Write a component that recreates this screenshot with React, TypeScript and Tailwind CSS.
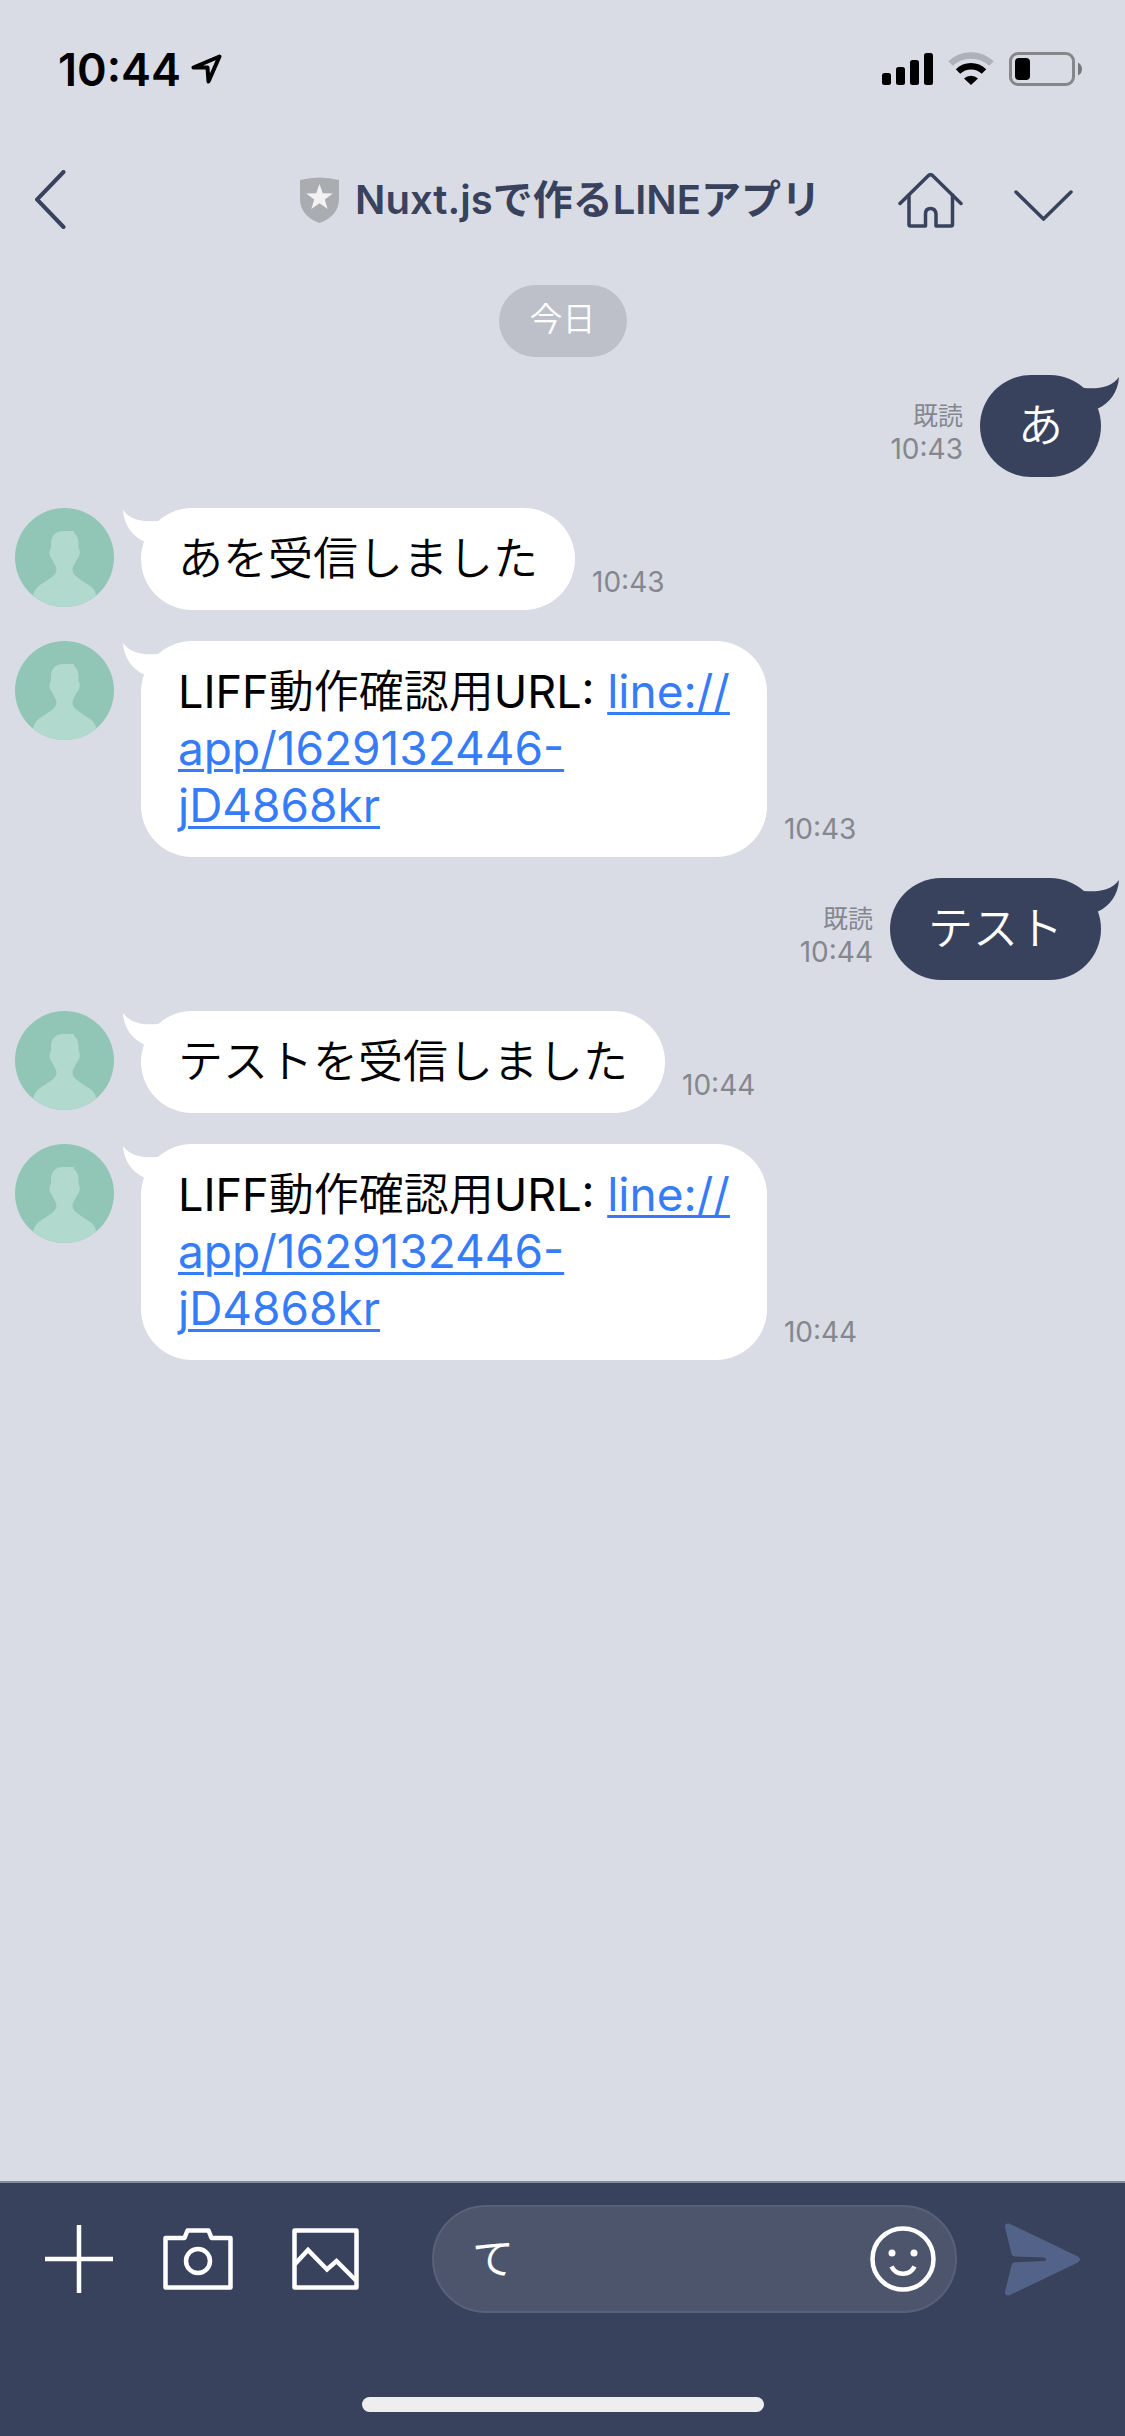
import React, { useState } from "react";

type Message = {
    id: number;
    from: "me" | "bot";
    time: string;
    text: React.ReactNode;
    link?: string[];
};

const liffText = (
    <>
        <span className="font-normal">LIFF</span>
        動作確認用
        <span className="font-normal">URL: </span>
    </>
);
const liffUrl = ["line://", "app/1629132446-", "jD4868kr"];

const messages: Message[] = [
    { id: 1, from: "me", time: "10:43", text: "あ" },
    { id: 2, from: "bot", time: "10:43", text: "あを受信しました" },
    { id: 3, from: "bot", time: "10:43", text: liffText, link: liffUrl },
    { id: 4, from: "me", time: "10:44", text: "テスト" },
    { id: 5, from: "bot", time: "10:44", text: "テストを受信しました" },
    { id: 6, from: "bot", time: "10:44", text: liffText, link: liffUrl },
];

const StatusBar: React.FC = () => (
    <div className="flex h-[138px] items-center justify-between pl-[58px] pr-[43px]">
        <div className="flex items-center gap-2.5 text-[45px] leading-none font-semibold text-black">
            10:44
            <svg width="31" height="31" viewBox="0 0 31 31" fill="none" stroke="#000" strokeWidth="4" strokeLinejoin="round">
                <path d="M28.5 2.5 2.5 13.5H16.5L17.5 27.5Z" />
            </svg>
        </div>
        <div className="flex items-center gap-[15px]">
            <svg width="51" height="34" viewBox="0 0 51 34" fill="#000">
                <rect x="0" y="21" width="9" height="12" rx="2.5" />
                <rect x="14" y="15" width="9" height="18" rx="2.5" />
                <rect x="28" y="8" width="9" height="25" rx="2.5" />
                <rect x="42" y="1" width="9" height="32" rx="2.5" />
            </svg>
            <svg width="46" height="34" viewBox="0 0 46 34" fill="none">
                <path d="M2.5 11.5A30 30 0 0 1 43.5 11.5" stroke="#aeb1ba" strokeWidth="6.5" />
                <path d="M10 19.5A19 19 0 0 1 36 19.5" stroke="#000" strokeWidth="6.5" />
                <path d="M16 26.5A10 10 0 0 1 30 26.5L23 33Z" fill="#000" />
            </svg>
            <svg width="73" height="34" viewBox="0 0 73 34">
                <rect x="1.5" y="1.5" width="63" height="31" rx="7.5" fill="none" stroke="#86878b" strokeWidth="3" />
                <rect x="6" y="6" width="15" height="22" rx="4" fill="#000" />
                <path d="M69 10.5Q73 12.5 73 17T69 23.5Z" fill="#77787c" />
            </svg>
        </div>
    </div>
);

const Header: React.FC = () => (
    <header className="grid h-[124px] grid-cols-[1fr_auto_1fr] items-center pl-[35px] pr-[43px] text-[#39425d]">
        <button aria-label="戻る" className="justify-self-start">
            <svg width="31" height="60" viewBox="0 0 31 60" fill="none" stroke="currentColor" strokeWidth="4" strokeLinecap="round">
                <path d="M28.5 2 2 29.5 28.5 57" />
            </svg>
        </button>
        <div className="flex items-center gap-4 pl-1">
            <svg width="39" height="46" viewBox="0 0 39 46">
                <path d="M0 3Q19.5-2 39 3V22C39 34 31 42 19.5 46 8 42 0 34 0 22Z" fill="#a9acb0" />
                <path d="m19.5 7 3.3 9.3 10 .2-8 6 2.9 9.5-8.2-5.7-8.2 5.7 2.9-9.5-8-6 10-.2Z" fill="#f3f1f2" />
            </svg>
            <h1 className="text-[40px] leading-none font-semibold whitespace-nowrap">Nuxt.jsで作るLINEアプリ</h1>
        </div>
        <div className="flex items-center justify-self-end gap-[51px] pr-[9px]">
            <button aria-label="ホーム">
                <svg width="65" height="55" viewBox="0 0 65 55" fill="none" stroke="currentColor" strokeWidth="3.5" strokeLinecap="round" strokeLinejoin="round">
                    <path d="M2 30.5 30.5 2.5Q32.5 1 34.5 2.5L63 30.5" />
                    <path d="M11 22V51.5Q11 53 12.5 53H27.5V41Q27.5 35.5 32.5 35.5T38 41V53H53Q54.5 53 54.5 51.5V22" />
                </svg>
            </button>
            <button aria-label="メニュー" className="pt-2.5">
                <svg width="59" height="31" viewBox="0 0 59 31" fill="none" stroke="currentColor" strokeWidth="3.5" strokeLinecap="round">
                    <path d="M2 2 29.5 29 57 2" />
                </svg>
            </button>
        </div>
    </header>
);

const Avatar: React.FC = () => (
    <svg className="size-[99px] shrink-0 rounded-full" viewBox="0 0 99 99">
        <rect width="99" height="99" fill="#91c6b6" />
        <path
            d="M36 36C36 27 41 23 48 23H59V25C63 28 64 33 63.5 40 66 43 64.5 50 62 51 60 56 57.5 58 57.5 62 58 68 64 70 72 76 79 80 82 84 81 92L70 99H29L18 90C18 84 21 79 28 75 36 70 41 67 41.5 62 41.5 58 39 56 37 51 34.5 49 33.5 43 36 40Z"
            fill="#b1d9cd"
        />
    </svg>
);

/* little horn at the top corner of a bubble */
const Tail: React.FC<{ mine?: boolean }> = ({ mine }) => (
    <svg
        className={
            mine
                ? "absolute top-0 -right-[18px] -scale-x-100 text-[#39425d]"
                : "absolute top-0 -left-[18px] text-white"
        }
        width="42"
        height="36"
        viewBox="0 0 42 36"
        fill="currentColor"
    >
        <path d="M0 2C1 17 9 28 21 33.5L40 30 35 13C21 14 8 13 0 2Z" />
    </svg>
);

const MyMessage: React.FC<{ message: Message }> = ({ message }) => (
    <li className="flex items-end justify-end gap-[17px] pr-6 not-first:-mt-2.5">
        <div className="pb-[11px] text-right text-[#85878f]">
            <div className="text-[25px] leading-[32px]">既読</div>
            <time className="block text-[28px] leading-[34px]">{message.time}</time>
        </div>
        <div className="relative rounded-[51px] bg-[#39425d] px-[38px] pt-[22px] pb-[23px] text-[45px] leading-[57px] font-[350] text-white">
            <Tail mine />
            {message.text}
        </div>
    </li>
);

const BotMessage: React.FC<{ message: Message }> = ({ message }) => (
    <li className="flex items-end pl-[15px]">
        <div className="self-start">
            <Avatar />
        </div>
        <div className="relative ml-[27px] max-w-[640px] rounded-[51px] bg-white px-[37px] pt-[22px] pb-[23px] text-[45px] leading-[57px] font-[350] text-black">
            <Tail />
            {message.text}
            {message.link && (
                <a href="#" className="text-[46px] font-normal text-[#367bf7] underline decoration-[3px] underline-offset-4">
                    {message.link.map((part, i) => (
                        <React.Fragment key={part}>
                            {i > 0 && <br />}
                            {part}
                        </React.Fragment>
                    ))}
                </a>
            )}
        </div>
        <time className="ml-[17px] pb-[11px] text-[28px] leading-[34px] text-[#85878f]">{message.time}</time>
    </li>
);

const InputBar: React.FC = () => {
    const [draft, setDraft] = useState("て");

    return (
        <footer className="border-t-2 border-[#848a99] bg-[#39425d] text-white">
            <div className="flex items-center pt-[22px] pr-[45px] pl-[45px]">
                <button aria-label="追加">
                    <svg width="68" height="68" viewBox="0 0 68 68" stroke="currentColor" strokeWidth="4.5">
                        <path d="M34 0V68M0 34H68" />
                    </svg>
                </button>
                <button aria-label="カメラ" className="ml-[50px]">
                    <svg width="70" height="62" viewBox="0 0 70 62" fill="none" stroke="currentColor" strokeWidth="4.5" strokeLinejoin="round">
                        <path d="M2.5 10H21.5L24.5 2.5H45.5L48.5 10H67.5V59.5H2.5Z" />
                        <circle cx="35" cy="33" r="12" />
                    </svg>
                </button>
                <button aria-label="写真" className="ml-[59px]">
                    <svg width="67" height="62" viewBox="0 0 67 62" fill="none" stroke="currentColor" strokeWidth="4.5" strokeLinejoin="round">
                        <path d="M2.5 2.5H64.5V59.5H2.5Z" />
                        <path d="M3 36 16 22 35 41.5 44.5 33 64 52.5" strokeLinejoin="miter" />
                    </svg>
                </button>
                <div className="ml-[73px] flex h-[108px] min-w-0 flex-1 items-center rounded-full border-2 border-[#586177] bg-[#4d556d] pr-[19px] pl-[38px]">
                    <input
                        aria-label="メッセージを入力"
                        className="w-full min-w-0 flex-1 bg-transparent text-[42px] leading-[60px] text-white outline-none"
                        value={draft}
                        onChange={(e) => setDraft(e.target.value)}
                    />
                    <button aria-label="スタンプ">
                        <svg width="66" height="66" viewBox="0 0 66 66" fill="none" stroke="currentColor" strokeWidth="4.5">
                            <circle cx="33" cy="33" r="30.5" />
                            <path d="M21.5 40.5C26 50 40 50 44.5 40.5" />
                            <circle cx="22" cy="27" r="3.5" fill="currentColor" stroke="none" />
                            <circle cx="44" cy="27" r="3.5" fill="currentColor" stroke="none" />
                        </svg>
                    </button>
                </div>
                <button aria-label="送信" className="ml-12 text-[#536288]">
                    <svg width="75" height="73" viewBox="0 0 75 73" fill="currentColor">
                        <path d="M4 .5 73 33.5Q77 36.5 73 39.5L4 72.5Q-.5 73 0 69L6.5 42Q7 39.5 10 39.3L39 38Q41 38 41 36.5T39 34.5L10 33.5Q7 33.3 6.5 31L0 4Q-.5 0 4 .5Z" />
                    </svg>
                </button>
            </div>
            <div className="mx-auto mt-[84px] mb-6 h-[15px] w-[402px] rounded-full bg-[#eeeeee]" />
        </footer>
    );
};

export default function App() {
    return (
        <div className="flex min-h-screen flex-col bg-[#d9dce4] font-['Inter','Noto_Sans_CJK_JP',sans-serif]">
            <StatusBar />
            <Header />
            <main className="flex-1 pt-[23px]">
                <div className="mx-auto flex h-[72px] w-fit items-center rounded-full bg-[#bdc0c9] px-[31px] pb-0.5 text-[33px] font-[350] text-white">
                    今日
                </div>
                <ul className="mt-[18px] flex flex-col gap-[31px]">
                    {messages.map((message) =>
                        message.from === "me" ? (
                            <MyMessage key={message.id} message={message} />
                        ) : (
                            <BotMessage key={message.id} message={message} />
                        )
                    )}
                </ul>
            </main>
            <InputBar />
        </div>
    );
}
